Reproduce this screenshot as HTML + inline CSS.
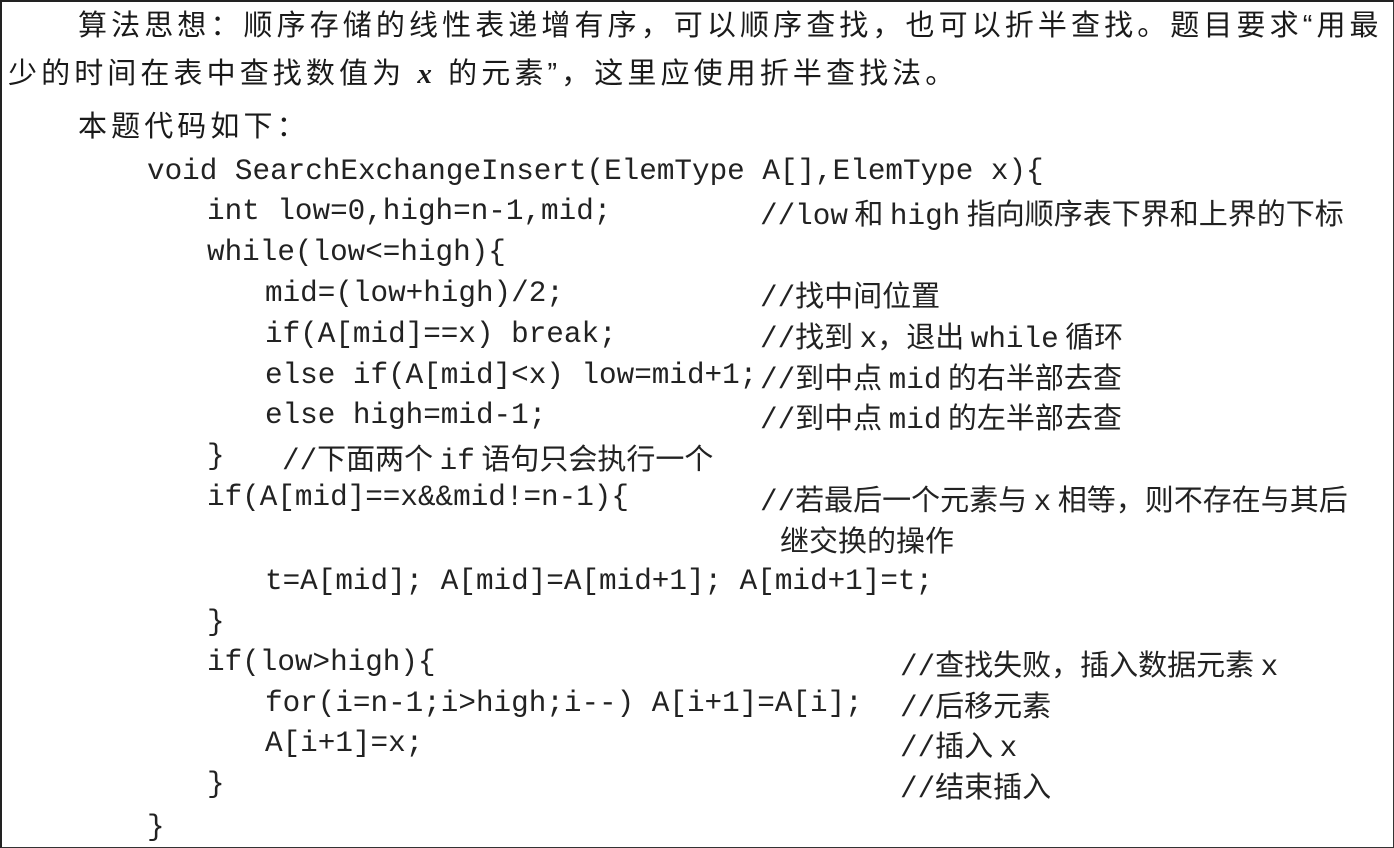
<!DOCTYPE html>
<html><head><meta charset="utf-8">
<style>
html,body{margin:0;padding:0;background:#fff;}
#f{position:relative;width:1394px;height:848px;overflow:hidden;background:#fff;box-sizing:border-box;border:2px solid #222;border-right:1px solid #333;border-bottom:1px solid #333;}
.t{position:absolute;white-space:pre;color:#1a1a1a;font-family:"Liberation Sans","Noto Sans CJK SC",sans-serif;font-size:29px;line-height:40px;}
.p{letter-spacing:4.1px;}
.c{font-family:"Liberation Mono","Noto Sans CJK SC",monospace;font-size:29.3px;color:#222;}
.m{font-family:"Liberation Mono","Noto Sans CJK SC",monospace;font-size:29.3px;color:#222;}
.m .h{font-family:"Noto Sans CJK SC",sans-serif;font-size:29px;}
i{font-style:italic;font-weight:bold;font-family:"Liberation Serif",serif;}
</style></head><body><div id="f">
<div class="t p" style="left:76px;top:4px">算法思想：顺序存储的线性表递增有序，可以顺序查找，也可以折半查找。题目要求“用最</div>
<div class="t p" style="left:6px;top:52px">少的时间在表中查找数值为 <i>x</i> 的元素”，这里应使用折半查找法。</div>
<div class="t p" style="left:76px;top:105px">本题代码如下：</div>

<div class="t c" style="left:145px;top:150px">void SearchExchangeInsert(ElemType A[],ElemType x){</div>
<div class="t c" style="left:205px;top:190px">int low=0,high=n-1,mid;</div>
<div class="t m" style="left:758px;top:190px">//low<span class="h"> 和 </span>high<span class="h"> 指向顺序表下界和上界的下标</span></div>
<div class="t c" style="left:205px;top:231px">while(low&lt;=high){</div>
<div class="t c" style="left:263px;top:272px">mid=(low+high)/2;</div>
<div class="t m" style="left:758px;top:272px">//<span class="h">找中间位置</span></div>
<div class="t c" style="left:263px;top:313px">if(A[mid]==x) break;</div>
<div class="t m" style="left:758px;top:313px">//<span class="h">找到 </span>x<span class="h">，退出 </span>while<span class="h"> 循环</span></div>
<div class="t c" style="left:263px;top:354px">else if(A[mid]&lt;x) low=mid+1;</div>
<div class="t m" style="left:758px;top:354px">//<span class="h">到中点 </span>mid<span class="h"> 的右半部去查</span></div>
<div class="t c" style="left:263px;top:394px">else high=mid-1;</div>
<div class="t m" style="left:758px;top:394px">//<span class="h">到中点 </span>mid<span class="h"> 的左半部去查</span></div>
<div class="t c" style="left:205px;top:435px">}</div>
<div class="t m" style="left:280px;top:435px">//<span class="h">下面两个 </span>if<span class="h"> 语句只会执行一个</span></div>
<div class="t c" style="left:205px;top:476px">if(A[mid]==x&amp;&amp;mid!=n-1){</div>
<div class="t m" style="left:758px;top:476px">//<span class="h">若最后一个元素与 </span>x<span class="h"> 相等，则不存在与其后</span></div>
<div class="t m" style="left:778px;top:517px"><span class="h">继交换的操作</span></div>
<div class="t c" style="left:263px;top:560px">t=A[mid]; A[mid]=A[mid+1]; A[mid+1]=t;</div>
<div class="t c" style="left:205px;top:601px">}</div>
<div class="t c" style="left:205px;top:641px">if(low&gt;high){</div>
<div class="t m" style="left:898px;top:641px">//<span class="h">查找失败，插入数据元素 </span>x</div>
<div class="t c" style="left:263px;top:682px">for(i=n-1;i&gt;high;i--) A[i+1]=A[i];</div>
<div class="t m" style="left:898px;top:682px">//<span class="h">后移元素</span></div>
<div class="t c" style="left:263px;top:722px">A[i+1]=x;</div>
<div class="t m" style="left:898px;top:722px">//<span class="h">插入 </span>x</div>
<div class="t c" style="left:205px;top:763px">}</div>
<div class="t m" style="left:898px;top:763px">//<span class="h">结束插入</span></div>
<div class="t c" style="left:145px;top:806px">}</div>
</div></body></html>
